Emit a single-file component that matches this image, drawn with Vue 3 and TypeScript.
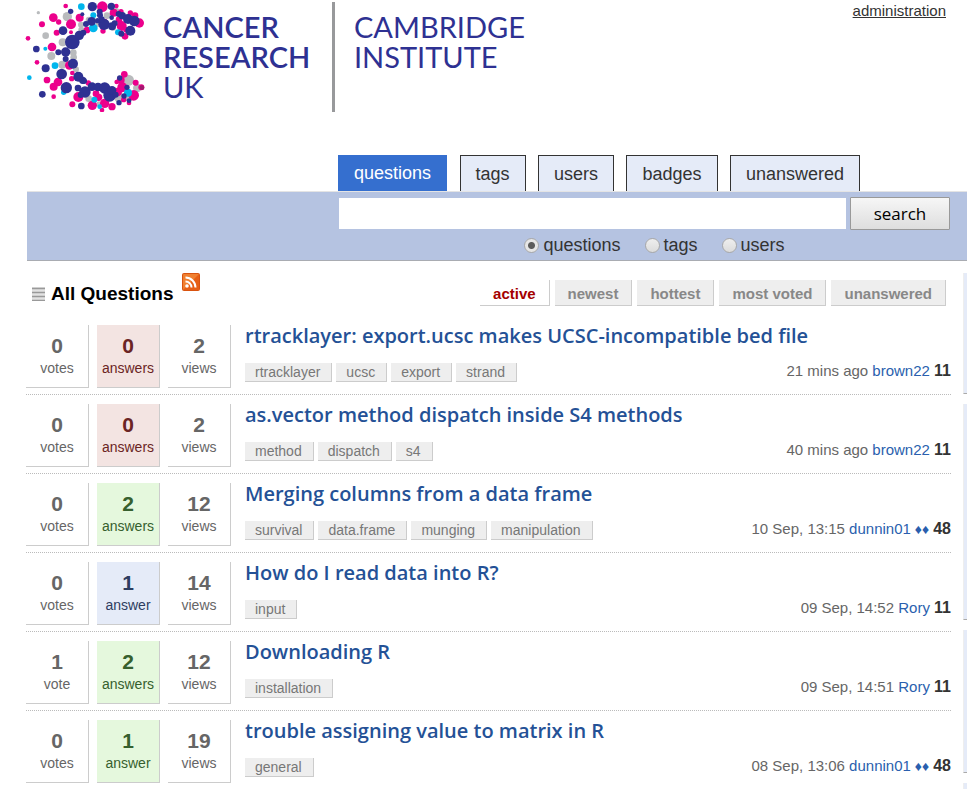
<script setup lang="ts">
import { ref } from 'vue'

interface Question {
  votes: number
  answers: number
  views: number
  state: 'none' | 'answered' | 'accepted'
  title: string
  tags: string[]
  when: string
  user: string
  moderator: boolean
  score: number
}

const tabs = ['questions', 'tags', 'users', 'badges', 'unanswered']
const scopes = ['questions', 'tags', 'users']
const sorts = ['active', 'newest', 'hottest', 'most voted', 'unanswered']
const scope = ref('questions')
const query = ref('')

const questions: Question[] = [
  { votes: 0, answers: 0, views: 2, state: 'none', title: 'rtracklayer: export.ucsc makes UCSC-incompatible bed file', tags: ['rtracklayer', 'ucsc', 'export', 'strand'], when: '21 mins ago', user: 'brown22', moderator: false, score: 11 },
  { votes: 0, answers: 0, views: 2, state: 'none', title: 'as.vector method dispatch inside S4 methods', tags: ['method', 'dispatch', 's4'], when: '40 mins ago', user: 'brown22', moderator: false, score: 11 },
  { votes: 0, answers: 2, views: 12, state: 'accepted', title: 'Merging columns from a data frame', tags: ['survival', 'data.frame', 'munging', 'manipulation'], when: '10 Sep, 13:15', user: 'dunnin01', moderator: true, score: 48 },
  { votes: 0, answers: 1, views: 14, state: 'answered', title: 'How do I read data into R?', tags: ['input'], when: '09 Sep, 14:52', user: 'Rory', moderator: false, score: 11 },
  { votes: 1, answers: 2, views: 12, state: 'accepted', title: 'Downloading R', tags: ['installation'], when: '09 Sep, 14:51', user: 'Rory', moderator: false, score: 11 },
  { votes: 0, answers: 1, views: 19, state: 'accepted', title: 'trouble assigning value to matrix in R', tags: ['general'], when: '08 Sep, 13:06', user: 'dunnin01', moderator: true, score: 48 },
]

const plural = (n: number, word: string) => (n === 1 ? word : word + 's')

// Logo dots as [cx, cy, r], one list per colour.
type Dot = [number, number, number]
const grey: Dot[] = [
  [55, 38, 4], [142, 50, 13], [77, 107, 9], [94, 168, 11], [128, 127, 11], [127, 194, 11],
  [160, 158, 9], [161, 172, 9], [168, 208, 8], [183, 74, 8], [184, 89, 8], [207, 60, 9],
  [261, 47, 9], [206, 296, 9], [298, 293, 14], [325, 241, 16], [352, 264, 12], [327, 296, 9],
  [289, 33, 8], [236, 72, 8], [237, 312, 7], [279, 83, 8],
]
const pink: Dot[] = [
  [137, 18, 6], [100, 53, 12], [66, 73, 8], [116, 66, 7], [153, 73, 14], [110, 98, 8],
  [24, 115, 6], [96, 141, 12], [51, 187, 6], [81, 240, 9], [114, 246, 12], [101, 260, 11],
  [101, 290, 6], [153, 97, 5], [179, 53, 11], [247, 20, 15], [289, 18, 6], [281, 38, 11],
  [303, 35, 7], [331, 39, 7], [345, 47, 9], [358, 69, 13], [305, 78, 14], [297, 59, 9],
  [315, 109, 9], [319, 89, 8], [201, 90, 9], [249, 93, 7], [148, 196, 12], [157, 219, 6],
  [155, 236, 7], [175, 291, 14], [157, 313, 8], [205, 249, 7], [217, 316, 13], [228, 281, 9],
  [236, 292, 10], [254, 310, 13], [276, 320, 10], [246, 330, 6], [313, 223, 9], [302, 240, 11],
  [347, 248, 8], [341, 286, 15], [307, 262, 14], [293, 276, 12], [327, 309, 6], [290, 246, 6],
  [311, 299, 7], [364, 262, 8], [187, 281, 9], [262, 292, 7], [254, 65, 8],
]
const cyan: Dot[] = [
  [184, 20, 9], [220, 46, 8], [220, 84, 12], [76, 146, 5], [105, 197, 9], [28, 233, 6],
  [131, 277, 7], [294, 97, 8], [223, 299, 8], [324, 278, 11], [239, 320, 6],
]
const navy: Dot[] = [
  [217, 20, 13], [274, 19, 10], [152, 34, 7], [187, 43, 5], [239, 35, 8], [240, 46, 8],
  [129, 92, 12], [49, 147, 9], [157, 126, 21], [178, 106, 13], [190, 98, 8], [115, 157, 8],
  [137, 156, 13], [137, 177, 8], [159, 191, 14], [77, 205, 11], [125, 222, 15], [139, 263, 16],
  [67, 283, 9], [175, 230, 14], [188, 241, 10], [174, 264, 9], [195, 276, 16], [184, 318, 9],
  [216, 260, 12], [234, 261, 12], [254, 264, 16], [269, 286, 18], [276, 271, 12], [198, 72, 8],
  [215, 64, 12], [252, 73, 16], [233, 62, 7], [245, 58, 8], [276, 79, 11], [284, 70, 8],
  [307, 47, 10], [324, 57, 14], [343, 63, 15], [331, 92, 14], [304, 101, 8], [296, 42, 8],
  [275, 53, 6], [299, 234, 7], [321, 262, 7], [297, 308, 7], [287, 284, 8], [312, 288, 7],
  [327, 302, 6], [182, 285, 8], [192, 243, 8],
]
const dotGroups = [
  { fill: '#b9bbbd', dots: grey },
  { fill: '#ec008c', dots: pink },
  { fill: '#00b6ed', dots: cyan },
  { fill: '#2e3192', dots: navy },
]
</script>

<template>
  <div class="page">
    <header class="top">
      <a class="logo" href="#" aria-label="Cancer Research UK Cambridge Institute">
        <svg width="510" height="112" viewBox="0 0 510 112">
          <g transform="scale(.33333)">
            <g v-for="g in dotGroups" :key="g.fill" :fill="g.fill">
              <circle v-for="(d, i) in g.dots" :key="i" :cx="d[0]" :cy="d[1]" :r="d[2] + 1" />
            </g>
            <circle cx="366" cy="263" r="7" fill="#a3196f" />
          </g>
          <g fill="#2e3192" font-family="Lato, sans-serif" font-size="29">
            <g font-weight="600">
              <text x="143" y="38">CANCER</text>
              <text x="143" y="68">RESEARCH</text>
            </g>
            <text x="143" y="98">UK</text>
            <text x="334" y="38">CAMBRIDGE</text>
            <text x="334" y="68">INSTITUTE</text>
          </g>
          <rect x="312" y="2" width="3" height="110" fill="#98999b" />
        </svg>
      </a>
      <a class="admin" href="#">administration</a>
    </header>

    <nav class="tabs">
      <template v-for="(t, i) in tabs" :key="t"><a href="#" class="tab" :class="{ on: i === 0 }">{{ t }}</a>{{ ' ' }}</template>
    </nav>

    <form class="search" @submit.prevent>
      <div class="search-row">
        <input v-model="query" class="query" type="text" aria-label="Search" />
        <button class="go" type="submit">search</button>
      </div>
      <div class="scopes">
        <label v-for="s in scopes" :key="s"><input v-model="scope" type="radio" name="scope" :value="s" />{{ s }}</label>
      </div>
    </form>

    <div class="body">
      <main>
        <div class="heading">
          <h1>
            <svg class="list-icon" width="13" height="14" viewBox="0 0 13 14">
              <rect width="13" height="14" fill="#e2e2e2" />
              <path d="M0 1.500h13M0 5.500h13M0 9.500h13M0 13.500h13" stroke="#999" stroke-width="1.500" />
            </svg>
            All Questions
          </h1>
          <a class="rss" href="#" aria-label="RSS feed">
            <svg width="18" height="18" viewBox="0 0 18 18">
              <rect width="18" height="18" rx="2" fill="#d9530f" />
              <rect x="1" y="1" width="16" height="16" rx="1" fill="#f08030" />
              <path d="M1 17L17 1v16z" fill="#e65f15" />
              <g fill="none" stroke="#fff" stroke-width="2">
                <path d="M3.500 8.500a6 6 0 0 1 6 6M3.500 4.500a10 10 0 0 1 10 10" />
              </g>
              <circle cx="5" cy="13" r="1.800" fill="#fff" />
            </svg>
          </a>
          <nav class="sorts">
            <a v-for="(s, i) in sorts" :key="i" href="#" :class="{ on: i === 0 }">{{ s }}</a>
          </nav>
        </div>

        <article v-for="q in questions" :key="q.title" class="question">
          <div class="stats">
            <div class="stat"><strong>{{ q.votes }}</strong><span>{{ plural(q.votes, 'vote') }}</span></div>
            <div class="stat" :class="q.state"><strong>{{ q.answers }}</strong><span>{{ plural(q.answers, 'answer') }}</span></div>
            <div class="stat"><strong>{{ q.views }}</strong><span>{{ plural(q.views, 'view') }}</span></div>
          </div>
          <div class="summary">
            <h2><a href="#">{{ q.title }}</a></h2>
            <div class="meta">
              <div class="tags">
                <a v-for="t in q.tags" :key="t" href="#">{{ t }}</a>
              </div>
              <div class="user">
                {{ q.when }} <a href="#">{{ q.user }}</a><span v-if="q.moderator" class="mod"> ♦♦</span> <b>{{ q.score }}</b>
              </div>
            </div>
          </div>
        </article>
      </main>

      <aside>
        <section class="panel about"></section>
        <section class="panel tags-panel"></section>
        <section class="panel recent"></section>
        <section class="panel"></section>
      </aside>
    </div>
  </div>
</template>

<style>
body {
  margin: 0;
  background: #fff;
}
</style>

<style scoped>
.page {
  font-family: "Liberation Sans", Arial, sans-serif;
  font-size: 16px;
  color: #333;
}
a {
  text-decoration: none;
}
.top {
  display: flex;
  justify-content: space-between;
  align-items: flex-start;
  padding: 0 21px 43px 20px;
}
.logo,
.logo svg,
.rss svg {
  display: block;
}
.admin {
  margin-top: 2px;
  font-size: 15px;
  line-height: 18px;
  color: #333;
  text-decoration: underline;
}
.tabs {
  display: flow-root;
  height: 36px;
  padding-left: 338px;
  white-space: nowrap;
}
.tab {
  display: inline-block;
  box-sizing: border-box;
  height: 36px;
  margin-right: 8px;
  padding: 0 15px;
  border: 1px solid #333;
  border-bottom: 0;
  background: #e5ebf8;
  color: #333;
  font-size: 18px;
  line-height: 36px;
  vertical-align: top;
}
.tab.on {
  border-color: #356fcf;
  background: #356fcf;
  color: #fff;
  line-height: 34px;
}
.search {
  margin-left: 27px;
  padding: 5px 0 3px 312px;
  border-top: 1px solid #e4e4e4;
  border-bottom: 1px solid #a9acb2;
  background: #b5c3e1;
}
.search-row {
  display: flex;
  align-items: center;
  gap: 4px;
  padding-right: 17px;
}
.query {
  flex: 1;
  min-width: 0;
  box-sizing: border-box;
  height: 31px;
  padding: 0 6px;
  border: 0;
  font: 18px "Liberation Sans", Arial, sans-serif;
}
.go {
  width: 100px;
  height: 33px;
  padding: 0;
  border: 1px solid #999;
  border-radius: 1px;
  background: linear-gradient(#f6f6f6, #dedede);
  color: #000;
  font: 17px "Open Sans", sans-serif;
}
.scopes {
  display: flex;
  justify-content: center;
  gap: 24px;
  margin-top: 3px;
  padding-left: 3px;
}
.scopes label {
  display: flex;
  align-items: center;
  gap: 4px;
  font-size: 18px;
  line-height: 24px;
}
.scopes input {
  appearance: none;
  box-sizing: border-box;
  width: 15px;
  height: 15px;
  margin: 0;
  border: 1px solid #a8a8a8;
  border-radius: 50%;
  background: linear-gradient(#eee, #dcdcdc);
}
.scopes input:checked {
  background: radial-gradient(circle, #5c5c5c 3px, #e6e6e6 4px);
}
.body {
  display: flex;
  align-items: flex-start;
  gap: 12px;
  padding-left: 26px;
}
main {
  flex: 1;
  min-width: 0;
}
.heading {
  display: flex;
  align-items: flex-start;
  padding: 12px 5px 10px 6px;
}
h1 {
  display: flex;
  align-items: center;
  gap: 6px;
  margin: 9px 9px 0 0;
  color: #000;
  font-size: 19px;
  line-height: 24px;
}
.sorts {
  display: flex;
  gap: 5px;
  margin: 7px 0 0 auto;
}
.sorts a {
  padding: 2px 13px 0;
  border-right: 1px solid #ccc;
  border-bottom: 1px solid #ccc;
  background: #eee;
  color: #888;
  font-size: 15px;
  font-weight: bold;
  line-height: 23px;
}
.sorts .on {
  background: #fff;
  color: #a40000;
}
.question {
  display: flex;
  gap: 14px;
  padding: 9px 0 6px;
  border-bottom: 1px dotted #bbb;
}
.question:last-child {
  border-bottom: 0;
}
.stats {
  display: flex;
  gap: 8px;
}
.stat {
  box-sizing: border-box;
  width: 63px;
  height: 63px;
  padding-top: 8px;
  border-right: 1px solid #ccc;
  border-bottom: 1px solid #ccc;
  color: #666;
  text-align: center;
}
.stat strong,
.stat span {
  display: block;
}
.stat strong {
  font-size: 21px;
  line-height: 26px;
}
.stat span {
  font-size: 14px;
  line-height: 18px;
}
.stat.none {
  background: #f3e4e2;
  color: #6b2424;
}
.stat.accepted {
  background: #e5f8dd;
  color: #36602e;
}
.stat.answered {
  background: #e5ebf8;
  color: #2d3d60;
}
.summary {
  flex: 1;
  min-width: 0;
}
h2 {
  margin: 0 0 16px;
  font: 600 20px/22px "Open Sans", sans-serif;
}
h2 a {
  color: #245196;
}
.meta {
  display: flex;
  justify-content: space-between;
}
.tags {
  display: flex;
  gap: 4px;
}
.tags a {
  height: 18px;
  padding: 0 11px 0 10px;
  border-right: 1px solid #ccc;
  border-bottom: 1px solid #ccc;
  background: #eee;
  color: #777;
  font-size: 14px;
  line-height: 18px;
}
.user {
  color: #666;
  font-size: 15px;
  line-height: 16px;
}
.user a,
.mod {
  color: #2a5fae;
}
.mod {
  font-size: 14px;
}
.user b {
  color: #333;
  font-size: 16px;
}
aside {
  width: 4px;
  padding-top: 12px;
  overflow: hidden;
}
.panel {
  box-sizing: border-box;
  height: 6px;
  border-left: 1px solid #eee;
  background: #e5ebf8;
}
.about {
  height: 121px;
  margin-bottom: 10px;
  border-bottom: 1px solid #aaa;
}
.tags-panel {
  height: 216px;
  margin-bottom: 10px;
  border-bottom: 1px solid #aaa;
}
.recent {
  height: 143px;
  margin-bottom: 10px;
  border-bottom: 1px solid #aaa;
}
</style>
